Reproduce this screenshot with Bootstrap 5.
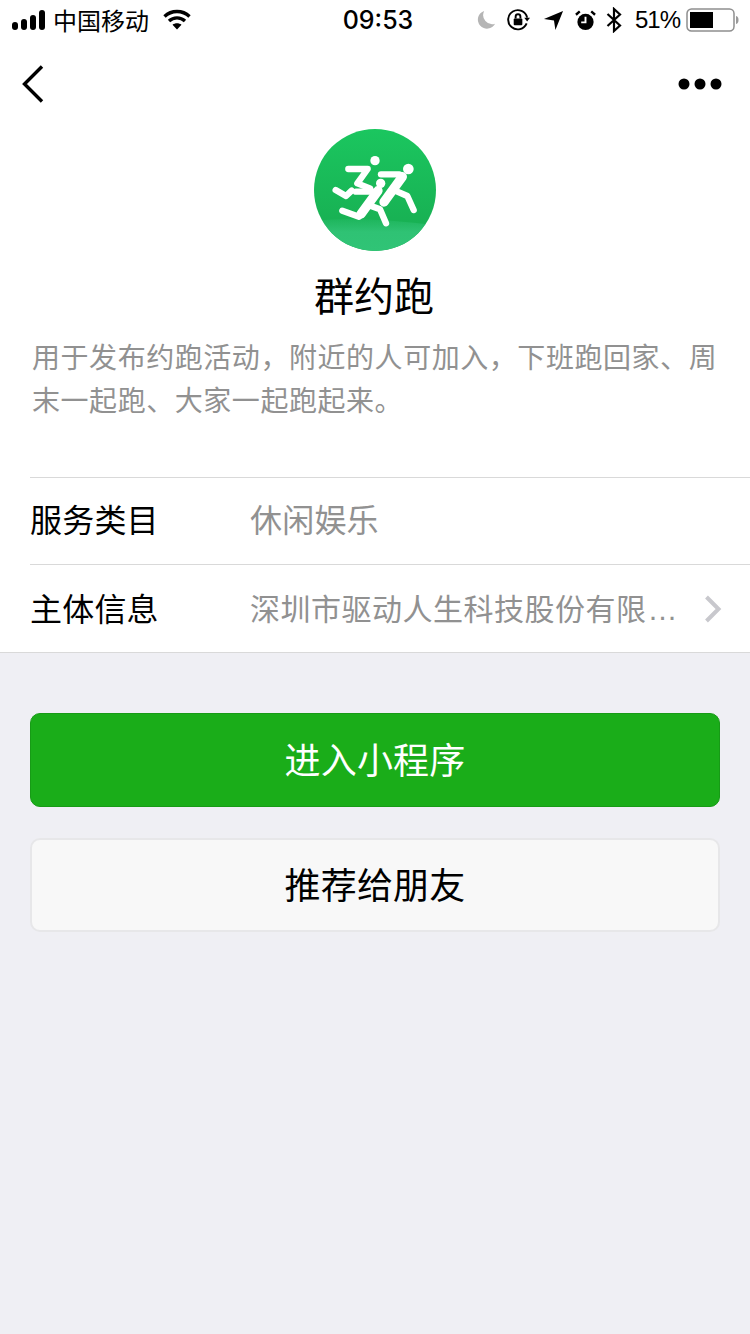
<!DOCTYPE html>
<html lang="zh">
<head>
  <meta charset="UTF-8" />
  <title>群约跑</title>
  <link href="https://cdn.jsdelivr.net/npm/bootstrap@5.3.3/dist/css/bootstrap.min.css" rel="stylesheet" />
  <style>
    body { background: #efeff4; font-family: "Noto Sans CJK SC", "Liberation Sans", sans-serif; color: #000; width: 750px; height: 1334px; overflow: hidden; }
    .status-bar { height: 40px; padding: 0 11px 0 12px; font-size: 24px; line-height: 40px; }
    .status-left, .status-right { width: 300px; }
    .carrier { margin-left: 7px; }
    .wifi-icon { margin-left: 14px; }
    .status-time { font-family: Inter, "Liberation Sans", sans-serif; font-weight: 500; font-size: 25px; margin-left: 5px; }
    .status-pct { font-family: "Liberation Sans", sans-serif; font-size: 24px; letter-spacing: -1px; margin: 0 6px 0 13px; }
    .ic-lock { margin-left: 11px; }
    .ic-arrow { margin-left: 13px; }
    .ic-alarm { margin-left: 11px; }
    .ic-bt { margin-left: 10px; }
    .nav-bar { height: 88px; padding: 0 28px 0 20px; }
    .info-top { background: #fff; height: 612px; }
    .app-logo { display: block; width: 122px; height: 122px; margin: 1px auto 0; }
    .app-name { font-size: 40px; line-height: 56px; margin: 15px 2px 0 0; font-weight: 400; text-align: center; }
    .app-desc { font-size: 28px; line-height: 43px; letter-spacing: .55px; color: #919191; margin: 13px 30px 0 32px; height: 142px; }
    .info-row { margin-left: 30px; height: 87px; border-top: 1px solid #d9d9d9; font-size: 32px; letter-spacing: .2px; }
    .info-row-last { height: 88px; }
    .info-label, .info-value { padding-bottom: 6px; }
    .info-label { width: 220px; flex-shrink: 0; }
    .info-value { color: #919191; }
    .info-value-sm { font-size: 30px; letter-spacing: .5px; white-space: nowrap; flex-grow: 1; padding-bottom: 0; }
    .info-row-last .info-label { padding-bottom: 4px; }
    .dots { font-family: "Liberation Sans", sans-serif; margin-left: 1px; }
    .row-arrow { margin-right: 28px; flex-shrink: 0; }
    .info-bottom { border-bottom: 1px solid #d9d9d9; }
    .btn-zone { padding: 60px 30px 0; }
    .btn-enter, .btn-share { display: block; width: 100%; font-size: 36px; line-height: 1; border-radius: 10px; padding: 0 0 4px 0; letter-spacing: .2px; }
    .btn-enter, .btn-enter:hover { height: 94px; background: #1aad19; border: 1px solid #179b16; color: #fff; }
    .btn-share, .btn-share:hover { height: 94px; margin-top: 31px; background: #f8f8f8; border: 2px solid #e7e7e9; color: #000; }
  </style>
</head>
<body>
  <div class="status-bar d-flex justify-content-between align-items-center bg-white">
    <div class="status-left d-flex align-items-center">
      <svg width="34" height="20" viewBox="0 0 34 20" fill="#000">
        <rect x="0" y="12" width="6" height="8" rx="3"/>
        <rect x="9" y="9" width="6" height="11" rx="3"/>
        <rect x="18" y="5" width="6" height="15" rx="3"/>
        <rect x="27" y="0" width="6" height="20" rx="3"/>
      </svg>
      <span class="carrier">中国移动</span>
      <svg class="wifi-icon" width="28" height="22" viewBox="0 0 28 22" fill="none" stroke="#000" stroke-width="3.400">
        <path d="M1.500 7.500C8.500 .8 19.500 .8 26.500 7.500"/>
        <path d="M6 12C10.500 7.800 17.500 7.800 22 12"/>
        <path d="M14 20.500L9.500 15.800C12 13.800 16 13.800 18.500 15.800Z" fill="#000" stroke="none"/>
      </svg>
    </div>
    <div class="status-time">09:53</div>
    <div class="status-right d-flex align-items-center justify-content-end">
      <svg width="20" height="20" viewBox="0 0 22 22"><path d="M9 1A10 10 0 1 0 21 15A10 10 0 0 1 9 1Z" fill="#b5b5b5"/></svg>
      <svg class="ic-lock" width="23" height="23" viewBox="0 0 24 24" fill="none" stroke="#000" stroke-width="2">
        <path d="M20.500 15A10 10 0 1 1 21 9"/>
        <path d="M18 9L24 9L21 13Z" fill="#000" stroke="none"/>
        <rect x="7" y="10" width="9" height="7" rx="1" fill="#000" stroke="none"/>
        <path d="M9 10V8A2.500 2.500 0 0 1 14 8V10"/>
      </svg>
      <svg class="ic-arrow" width="21" height="21" viewBox="0 0 20 22"><path d="M20 1L12 21L10.500 11L0 9.500Z" fill="#000"/></svg>
      <svg class="ic-alarm" width="21" height="21" viewBox="0 0 22 22">
        <circle cx="11" cy="12.500" r="8.500" fill="#000"/>
        <path d="M11 7V13H6.500" fill="none" stroke="#fff" stroke-width="2"/>
        <path d="M1 5L5 1.500M21 5L17 1.500" stroke="#000" stroke-width="2.500"/>
      </svg>
      <svg class="ic-bt" width="16" height="26" viewBox="0 0 16 26" fill="none" stroke="#000" stroke-width="2.200">
        <path d="M1.500 7L14 18.500L8 24V2L14 7.500L1.500 19"/>
      </svg>
      <span class="status-pct">51%</span>
      <svg width="53" height="24" viewBox="0 0 53 24">
        <rect x="1" y="1" width="47" height="22" rx="4.500" fill="none" stroke="#8e8e8e" stroke-width="1.500"/>
        <rect x="4" y="4" width="23" height="16" fill="#000"/>
        <path d="M50 8C52 8.500 52.500 10 52.500 12S52 15.500 50 16Z" fill="#9a9a9a"/>
      </svg>
    </div>
  </div>

  <div class="info-top">
    <div class="nav-bar d-flex justify-content-between align-items-center">
      <svg width="26" height="40" viewBox="0 0 26 40" fill="none" stroke="#000" stroke-width="3.400">
        <path d="M22 2.500L4.500 20L22 37.500"/>
      </svg>
      <svg width="44" height="12" viewBox="0 0 44 12" fill="#000">
        <circle cx="6" cy="6" r="5.500"/>
        <circle cx="22" cy="6" r="5.500"/>
        <circle cx="38" cy="6" r="5.500"/>
      </svg>
    </div>

    <svg class="app-logo" viewBox="42 27 366 366">
      <defs>
        <linearGradient id="logoBg" x1="0" y1="0" x2="0" y2="1">
          <stop offset="0" stop-color="#1bc65f"/>
          <stop offset="1" stop-color="#17ab50"/>
        </linearGradient>
        <linearGradient id="logoBand" x1="0" y1="0" x2="0" y2="1">
          <stop offset="0" stop-color="#2fc274" stop-opacity=".25"/>
          <stop offset=".4" stop-color="#2fc274"/>
          <stop offset="1" stop-color="#30c476"/>
        </linearGradient>
        <clipPath id="logoClip"><circle cx="225" cy="210" r="183"/></clipPath>
      </defs>
      <circle cx="225" cy="210" r="183" fill="url(#logoBg)"/>
      <path d="M42 304C130 292 240 296 408 316V393H42Z" fill="url(#logoBand)" clip-path="url(#logoClip)"/>
      <g fill="none" stroke="#fff" stroke-width="19" stroke-linecap="round" stroke-linejoin="round">
        <path d="M145 147H203L172 190L210 205"/>
        <path d="M107 210L138 228L155 212"/>
        <path d="M243 163H298"/>
        <path d="M285 212L322 228L341 270"/>
        <path d="M168 215H224"/>
        <path d="M127 272L177 290L205 250"/>
        <path d="M203 254L240 268L258 310"/>
      </g>
      <g fill="none" stroke="#fff" stroke-width="28" stroke-linecap="round">
        <path d="M307 170L252 246"/>
        <path d="M234 212L183 282"/>
      </g>
      <circle cx="225" cy="122" r="14" fill="#fff"/>
      <circle cx="325" cy="147" r="16" fill="#fff"/>
      <circle cx="242" cy="190" r="14" fill="#fff"/>
    </svg>

    <h1 class="app-name">群约跑</h1>
    <p class="app-desc">用于发布约跑活动，附近的人可加入，下班跑回家、周末一起跑、大家一起跑起来。</p>

    <div class="info-row d-flex align-items-center">
      <div class="info-label">服务类目</div>
      <div class="info-value">休闲娱乐</div>
    </div>
    <div class="info-row info-row-last d-flex align-items-center">
      <div class="info-label">主体信息</div>
      <div class="info-value info-value-sm">深圳市驱动人生科技股份有限<span class="dots">…</span></div>
      <svg class="row-arrow" width="18" height="28" viewBox="0 0 18 28" fill="none" stroke="#c8c8cd" stroke-width="4">
        <path d="M2.500 2L14.500 14L2.500 26"/>
      </svg>
    </div>
  </div>
  <div class="info-bottom"></div>

  <div class="btn-zone">
    <button type="button" class="btn btn-enter">进入小程序</button>
    <button type="button" class="btn btn-share">推荐给朋友</button>
  </div>

  <script src="https://cdn.jsdelivr.net/npm/bootstrap@5.3.3/dist/js/bootstrap.bundle.min.js"></script>
</body>
</html>
